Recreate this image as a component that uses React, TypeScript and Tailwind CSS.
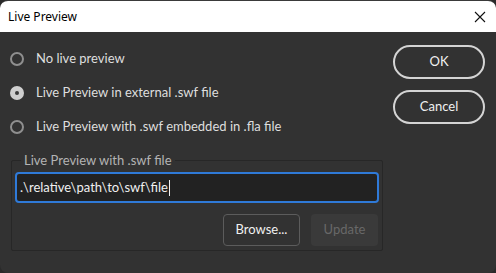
import React from 'react';

function Radio({ label, checked }: { label: string; checked?: boolean }) {
  return (
    <div className="flex items-center h-[20px] gap-[12px]">
      {checked ? (
        <span className="w-[14px] h-[14px] rounded-full bg-[#cfcfcf] flex items-center justify-center">
          <span className="w-[4px] h-[4px] rounded-full bg-[#3a3a3a]" />
        </span>
      ) : (
        <span className="w-[14px] h-[14px] rounded-full border-2 border-[#8f8f8f]" />
      )}
      <span className="text-[13px] text-[#dedede]">{label}</span>
    </div>
  );
}

export default function App() {
  return (
    <div className="w-[496px] h-[273px] bg-[#2a2a2a] overflow-hidden" style={{ fontFamily: 'Lato, "Noto Sans", sans-serif' }}>
      <div className="h-full flex flex-col rounded-t-[8px] overflow-hidden border-t border-[#3a3a3a]">
        {/* title bar */}
        <div className="h-[31px] bg-white flex items-center justify-between pl-[8px] pr-[9px] shrink-0">
          <span className="text-[12px] text-black" style={{ fontFamily: '"Noto Sans", sans-serif' }}>Live Preview</span>
          <svg width="12" height="12" viewBox="0 0 12 12" className="mr-[1px]">
            <path d="M1 1 L11 11 M11 1 L1 11" stroke="#111" strokeWidth="1.1" />
          </svg>
        </div>

        {/* body */}
        <div className="flex-1 bg-[#323232] flex pl-[10px] pr-[11px] gap-[10px] rounded-b-[8px]">
          <div className="flex flex-col w-[373px] pt-[17px]">
            <div className="flex flex-col gap-[14px]">
              <Radio label="No live preview" />
              <Radio label="Live Preview in external .swf file" checked />
              <Radio label="Live Preview with .swf embedded in .fla file" />
            </div>

            <fieldset className="mt-[14px] ml-[1px] border border-[#272727] rounded-[2px] px-[3px] pb-[4px] pt-[3px]">
              <legend className="ml-[6px] px-[3px] text-[13px] leading-[18px] text-[#b4b4b4]">Live Preview with .swf file</legend>
              <div className="h-[31px] rounded-[4px] border-2 border-[#2f7ad8] bg-[#222222] flex items-center px-[3px]">
                <span className="text-[13px] text-[#f0f0f0]">.\relative\path\to\swf\file</span>
                <span className="w-[1px] h-[16px] bg-[#f0f0f0] ml-[1px]" />
              </div>
              <div className="flex justify-end gap-[11px] mt-[11px] pr-[1px]">
                <button className="h-[32px] w-[77px] rounded-[4px] border border-[#5c5c5c] text-[13px] text-[#f0f0f0]">Browse...</button>
                <button className="h-[32px] w-[67px] rounded-[4px] bg-[#3a3a3a] text-[13px] text-[#686868]">Update</button>
              </div>
            </fieldset>
          </div>

          <div className="flex flex-col gap-[11px] pt-[13px]">
            <button className="h-[34px] w-[92px] rounded-full border-2 border-[#d4d4d4] text-[13px] text-[#f0f0f0]">OK</button>
            <button className="h-[34px] w-[92px] rounded-full border-2 border-[#d4d4d4] text-[13px] text-[#f0f0f0]">Cancel</button>
          </div>
        </div>
      </div>
    </div>
  );
}
